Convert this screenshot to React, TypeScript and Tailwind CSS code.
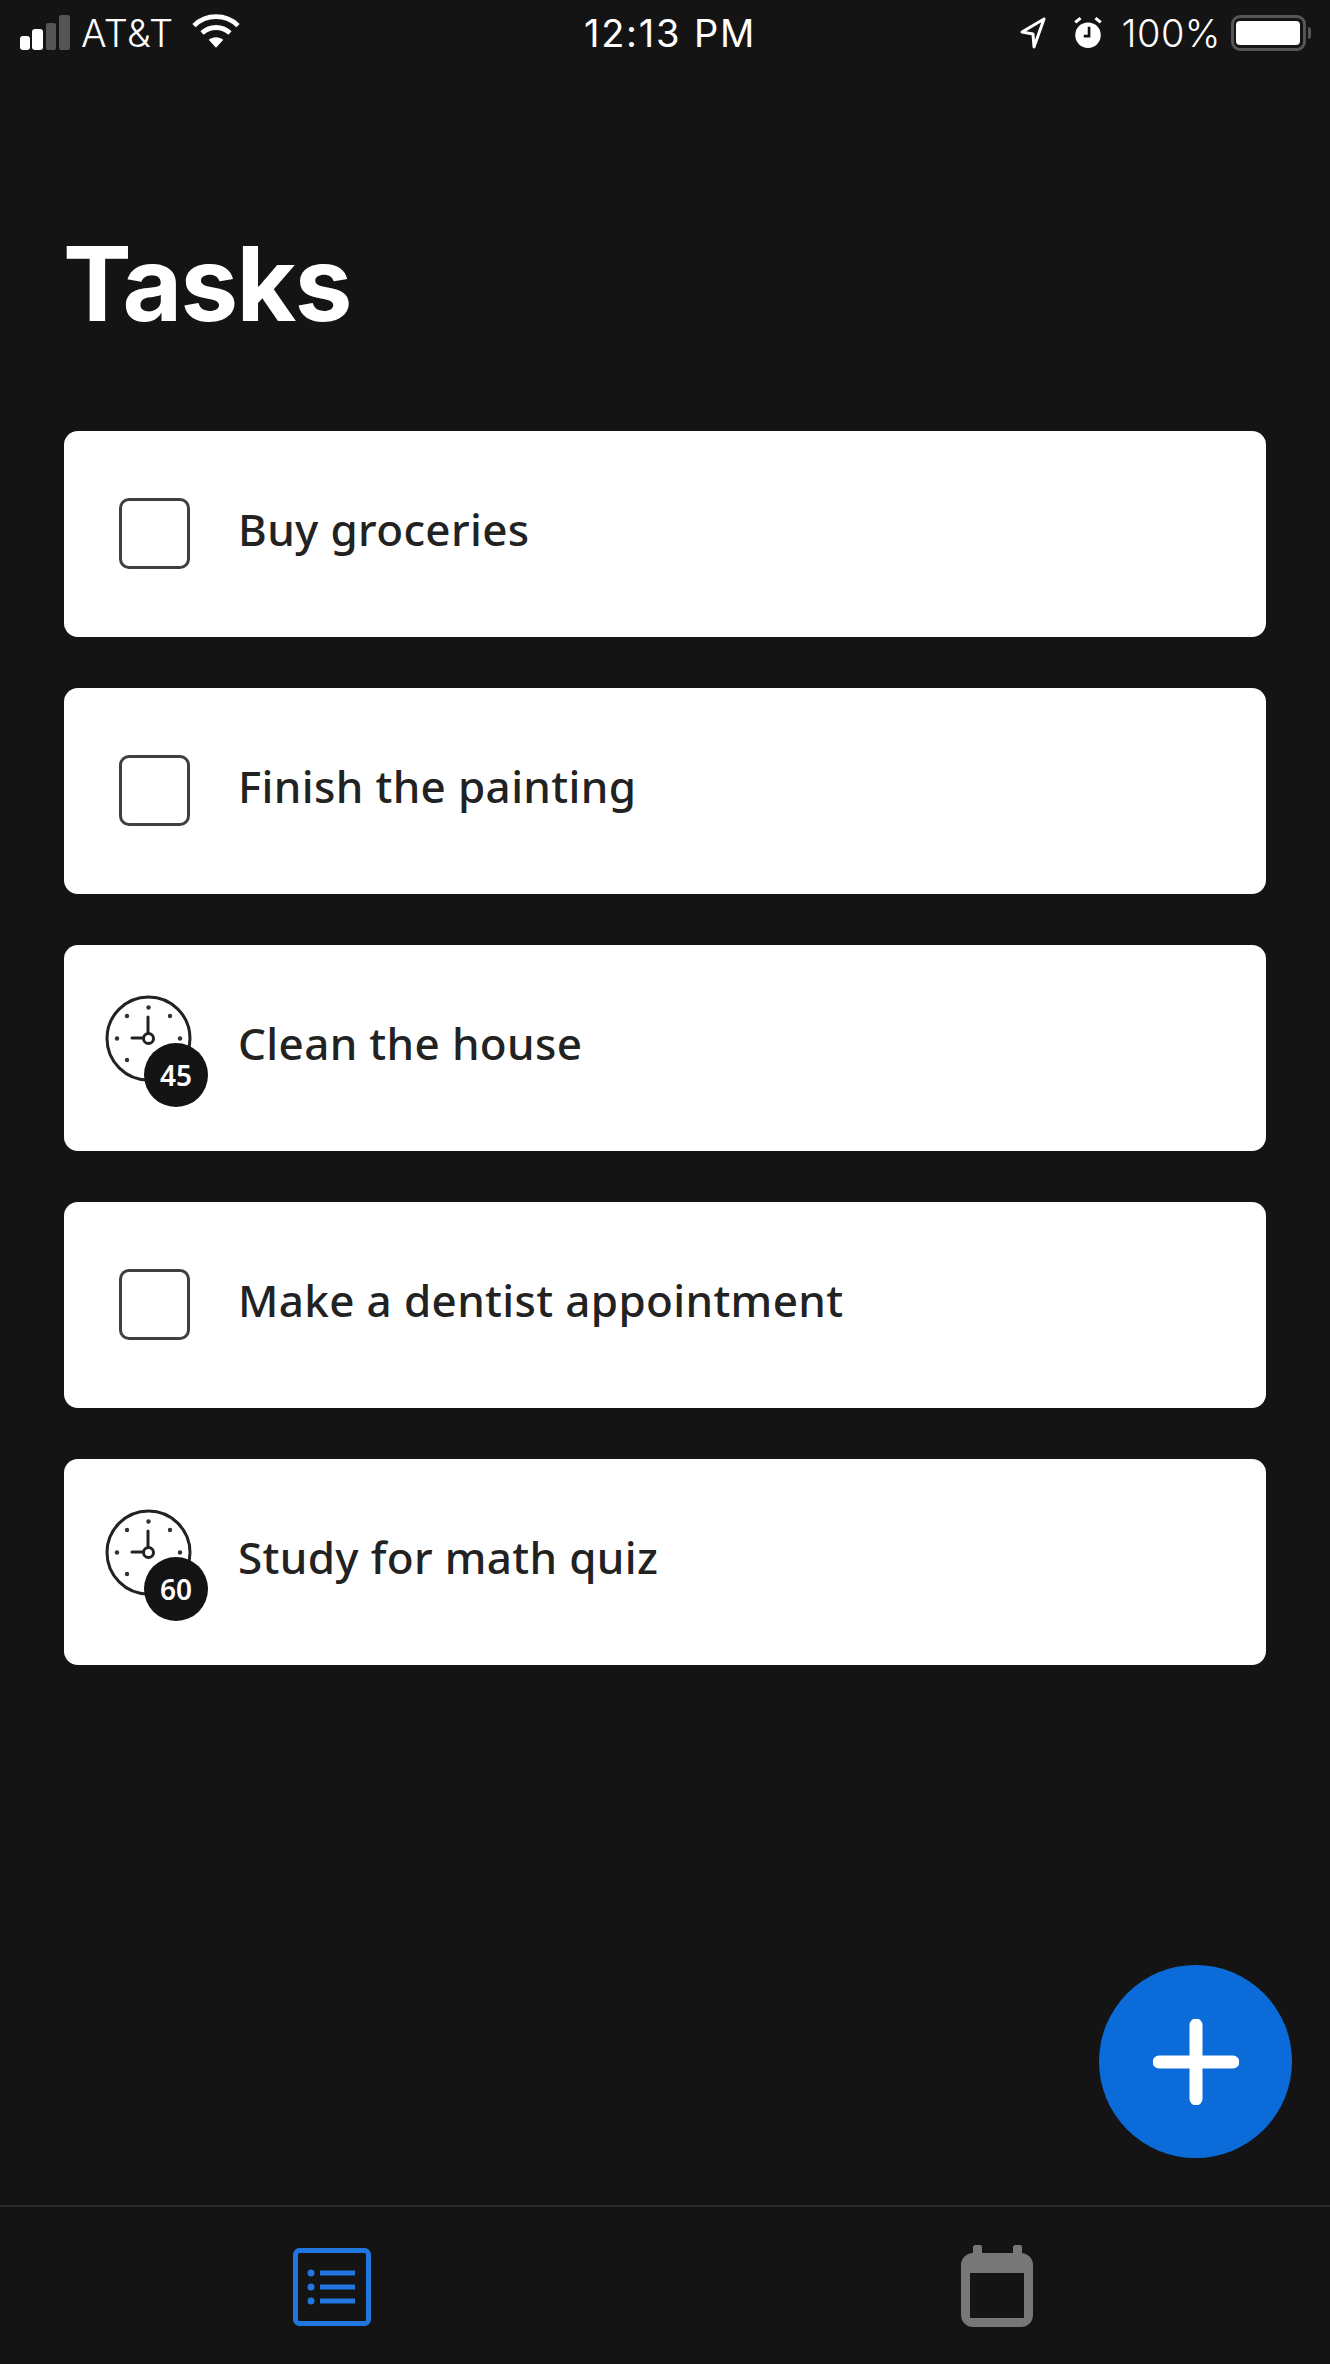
const SANS = "font-['Noto_Sans',sans-serif]";

function StatusBar() {
  return (
    <div className="flex h-[66px] items-start justify-between pl-[19px] pr-[19px] pt-[14px] text-white font-['Inter',sans-serif] text-[38px] leading-[38px]">
      <div className="flex w-[410px] items-center">
        <svg width="52" height="36" viewBox="0 0 52 36">
          <rect x="1" y="21" width="10" height="14" rx="3" fill="#fff" />
          <rect x="13" y="14" width="11" height="21" rx="3" fill="#fff" />
          <rect x="27" y="8" width="10" height="27" rx="2" fill="#555" />
          <rect x="40" y="0" width="11" height="35" rx="2" fill="#555" />
        </svg>
        <span className="ml-[10px] font-light tracking-[0.4px]">AT&amp;T</span>
        <svg className="ml-[18px] -translate-y-[2px]" width="48" height="36" viewBox="0 0 36 27" fill="none">
          <path d="M1.5 9.5C10.5 0.5 25.5 0.5 34.5 9.5" stroke="#fff" strokeWidth="3.6" />
          <path d="M7.5 15C13.5 9.5 22.5 9.5 28.5 15" stroke="#fff" strokeWidth="3.6" />
          <path d="M12.5 20C15.5 17.5 20.5 17.5 23.5 20L18 26Z" fill="#fff" />
        </svg>
      </div>
      <span className="font-normal tracking-[1.8px]">12:13 PM</span>
      <div className="flex w-[400px] items-center justify-end">
        <svg width="28" height="32" viewBox="0 0 26 32" fill="none">
          <path d="M24 2L2 15L13 17L14 30Z" stroke="#fff" strokeWidth="3" strokeLinejoin="round" />
        </svg>
        <svg className="ml-[26px]" width="30" height="34" viewBox="0 0 26 32">
          <circle cx="13" cy="18" r="12" fill="#fff" />
          <path d="M1 6L6 2M25 6L20 2" stroke="#fff" strokeWidth="3" />
          <path d="M14 10V19H9" stroke="#141414" strokeWidth="2.5" fill="none" />
        </svg>
        <span className="ml-[18px] font-light tracking-[0.5px]">100%</span>
        <div className="ml-[10px] flex h-[36px] w-[75px] items-center justify-center rounded-[9px] border-[3px] border-[#555]">
          <div className="h-[24px] w-[64px] rounded-[4px] bg-white" />
        </div>
        <div className="ml-[2px] h-[12px] w-[3px] rounded-r-full bg-[#555]" />
      </div>
    </div>
  );
}

function Checkbox() {
  return (
    <div className="ml-[55px] h-[71px] w-[71px] -translate-y-[1px] rounded-[10px] border-[3px] border-[#3f3f3f]" />
  );
}

function TimerIcon({ minutes }: { minutes: number }) {
  return (
    <div className="relative ml-[41px] mt-[5px] h-[112px] w-[103px] shrink-0">
      <svg className="absolute left-0 top-0" width="88" height="88" viewBox="0 0 88 88" fill="none">
        <circle cx="43.5" cy="43.5" r="41.5" stroke="#222" strokeWidth="3" />
        <path d="M43 22V43M43 43H27" stroke="#222" strokeWidth="3" strokeLinecap="round" />
        <circle cx="43.5" cy="43.5" r="5" fill="#fff" stroke="#222" strokeWidth="3" />
        <g fill="#333">
          <circle cx="43.5" cy="12.5" r="2.2" />
          <circle cx="22" cy="21" r="2.2" />
          <circle cx="65" cy="21" r="2.2" />
          <circle cx="12" cy="43.5" r="2.2" />
          <circle cx="75" cy="43.5" r="2.2" />
          <circle cx="22" cy="65" r="2.2" />
        </g>
      </svg>
      <div className={`absolute left-[39px] top-[48px] flex h-[64px] w-[64px] items-center justify-center rounded-full bg-[#141414] text-[28px] font-semibold text-white ${SANS}`}>
        {minutes}
      </div>
    </div>
  );
}

function TaskCard({ title, minutes }: { title: string; minutes?: number }) {
  return (
    <div className="flex h-[206px] w-[1202px] items-center rounded-[14px] bg-white">
      {minutes ? <TimerIcon minutes={minutes} /> : <Checkbox />}
      <span className={`${minutes ? "ml-[30px]" : "ml-[48px]"} -translate-y-[5px] text-[44px] font-medium tracking-[0.35px] text-[#222] ${SANS}`}>
        {title}
      </span>
    </div>
  );
}

export default function App() {
  return (
    <div className="relative flex h-[2364px] w-[1330px] flex-col overflow-hidden bg-[#141414]">
      <StatusBar />
      <h1 className="ml-[63px] mt-[182px] font-['Inter',sans-serif] text-[103px] font-bold leading-[72px] tracking-[-1.7px] text-white">
        Tasks
      </h1>
      <div className="ml-[64px] mt-[111px] flex flex-col gap-[51px]">
        <TaskCard title="Buy groceries" />
        <TaskCard title="Finish the painting" />
        <TaskCard title="Clean the house" minutes={45} />
        <TaskCard title="Make a dentist appointment" />
        <TaskCard title="Study for math quiz" minutes={60} />
      </div>
      <button className="absolute left-[1099px] top-[1965px] flex h-[193px] w-[193px] items-center justify-center rounded-full bg-[#0b6bd8]">
        <svg width="86" height="86" viewBox="0 0 86 86">
          <path d="M43 6V80M6 43H80" stroke="#fff" strokeWidth="13" strokeLinecap="round" />
        </svg>
      </button>
      <div className="mt-auto flex h-[159px] border-t-[2px] border-[#2a2a2a]">
        <div className="flex w-[665px] justify-center pt-[41px]">
          <svg width="78" height="78" viewBox="0 0 78 78" fill="none" className="-translate-x-[1px]">
            <rect x="2.5" y="2.5" width="73" height="73" rx="4" stroke="#2176e0" strokeWidth="5" />
            <g fill="#2176e0">
              <circle cx="18" cy="25" r="3.5" />
              <circle cx="18" cy="39" r="3.5" />
              <circle cx="18" cy="53" r="3.5" />
              <rect x="27" y="22.5" width="35" height="5" />
              <rect x="27" y="36.5" width="35" height="5" />
              <rect x="27" y="50.5" width="35" height="5" />
            </g>
          </svg>
        </div>
        <div className="flex w-[665px] justify-center pt-[38px]">
          <svg width="72" height="82" viewBox="0 0 72 82" fill="none" className="-translate-x-[1px]">
            <path d="M12 8H60A12 12 0 0 1 72 20V70A12 12 0 0 1 60 82H12A12 12 0 0 1 0 70V20A12 12 0 0 1 12 8ZM9 28V73H63V28Z" fill="#777" fillRule="evenodd" />
            <rect x="12" y="0" width="9" height="12" rx="2" fill="#777" />
            <rect x="52" y="0" width="9" height="12" rx="2" fill="#777" />
          </svg>
        </div>
      </div>
    </div>
  );
}
